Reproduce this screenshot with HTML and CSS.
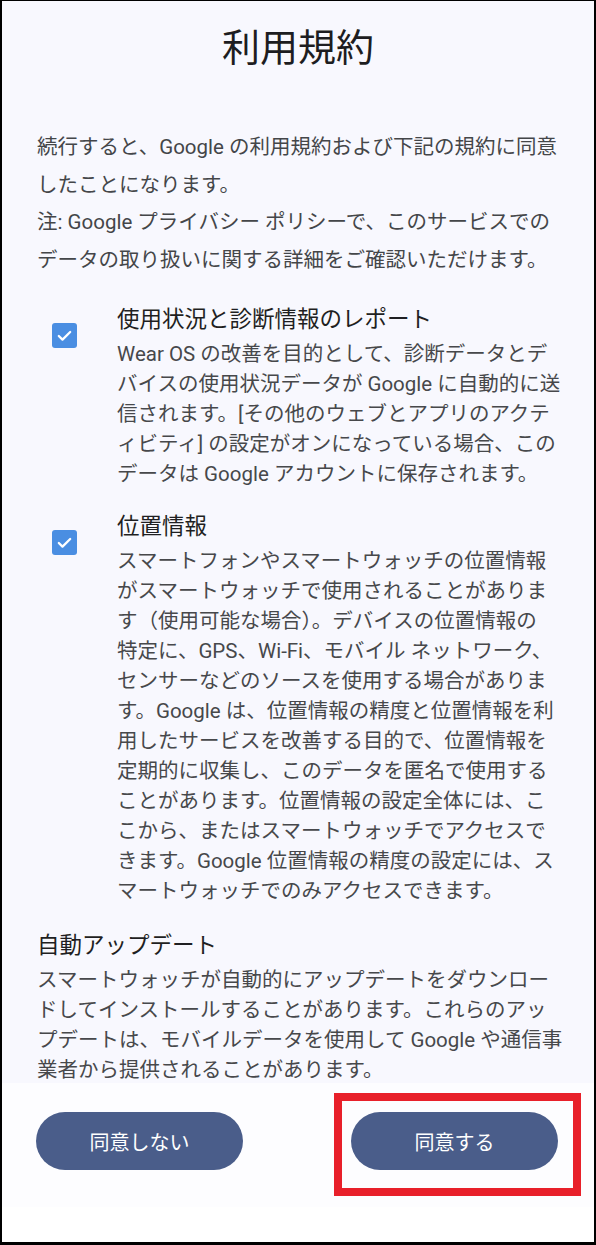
FILE: index.html
```html
<!DOCTYPE html>
<html lang="ja">
<head>
<meta charset="utf-8">
<title>利用規約</title>
<link rel="stylesheet" href="styles.css">
</head>
<body>
<div class="screen">
  <main class="scroll">
    <h1 class="title">利用規約</h1>
    <p class="intro">続行すると、Google の利用規約および下記の規約に同意<br>したことになります。<br>注: Google プライバシー ポリシーで、このサービスでの<br>データの取り扱いに関する詳細をご確認いただけます。</p>

    <section class="item">
      <span class="check"><svg viewBox="0 0 24 24" width="21" height="21"><path d="M5.5 12.5l4.2 4.2L18.5 8" fill="none" stroke="#fff" stroke-width="2.6" stroke-linecap="round" stroke-linejoin="round"/></svg></span>
      <div class="item-body">
        <h2 class="item-title">使用状況と診断情報のレポート</h2>
        <p class="desc">Wear OS の改善を目的として、診断データとデ<br>バイスの使用状況データが Google に自動的に送<br>信されます。[その他のウェブとアプリのアクテ<br>ィビティ] の設定がオンになっている場合、この<br>データは Google アカウントに保存されます。</p>
      </div>
    </section>

    <section class="item item-second">
      <span class="check"><svg viewBox="0 0 24 24" width="21" height="21"><path d="M5.5 12.5l4.2 4.2L18.5 8" fill="none" stroke="#fff" stroke-width="2.6" stroke-linecap="round" stroke-linejoin="round"/></svg></span>
      <div class="item-body">
        <h2 class="item-title">位置情報</h2>
        <p class="desc">スマートフォンやスマートウォッチの位置情報<br>がスマートウォッチで使用されることがありま<br>す（使用可能な場合）。デバイスの位置情報の<br>特定に、GPS、Wi-Fi、モバイル ネットワーク、<br>センサーなどのソースを使用する場合がありま<br>す。Google は、位置情報の精度と位置情報を利<br>用したサービスを改善する目的で、位置情報を<br>定期的に収集し、このデータを匿名で使用する<br>ことがあります。位置情報の設定全体には、こ<br>こから、またはスマートウォッチでアクセスで<br>きます。Google 位置情報の精度の設定には、ス<br>マートウォッチでのみアクセスできます。</p>
      </div>
    </section>

    <section class="auto">
      <h2 class="item-title">自動アップデート</h2>
      <p class="desc">スマートウォッチが自動的にアップデートをダウンロー<br>ドしてインストールすることがあります。これらのアッ<br>プデートは、モバイルデータを使用して Google や通信事<br>業者から提供されることがあります。</p>
    </section>
  </main>

  <footer class="actions">
    <button class="btn">同意しない</button>
    <button class="btn">同意する</button>
    <span class="highlight"></span>
  </footer>
  <div class="navbar"></div>
</div>
</body>
</html>
```

FILE: styles.css
```css
* { box-sizing: border-box; }

html, body {
  margin: 0;
  padding: 0;
  background: #000;
}

.screen {
  width: 596px;
  height: 1245px;
  border-style: solid;
  border-color: #000;
  border-width: 1px 2px 3px 2px;
  display: flex;
  flex-direction: column;
  background: #fff;
  font-family: Roboto, "Noto Sans CJK JP", sans-serif;
  overflow: hidden;
}

.scroll {
  height: 1082px;
  flex: none;
  background: #f8f8fe;
  padding: 23px 0 0 35px;
  overflow: hidden;
}

.title {
  margin: 0;
  text-align: center;
  font-size: 38px;
  line-height: 48px;
  font-weight: 400;
  color: #1d1d21;
  padding-right: 35px;
}

.intro {
  margin: 57px 0 0;
  font-size: 20.5px;
  line-height: 37.5px;
  color: #444649;
  white-space: nowrap;
}

.item {
  display: flex;
  align-items: flex-start;
  margin-top: 20px;
}

.item-second {
  margin-top: 17px;
}

.check {
  flex: none;
  width: 25px;
  height: 25px;
  margin: 24px 40px 0 15px;
  border-radius: 3px;
  background: #4a8ee2;
  display: flex;
  align-items: center;
  justify-content: center;
}

.item-title {
  margin: 0;
  font-size: 22.5px;
  line-height: 40px;
  font-weight: 400;
  color: #1f1f22;
  white-space: nowrap;
}

.desc {
  margin: 0;
  font-size: 20.5px;
  line-height: 30px;
  color: #47484b;
  white-space: nowrap;
}

.item-second .desc {
  line-height: 30px;
}

.auto {
  margin-top: 19px;
}

.actions {
  position: relative;
  height: 124px;
  flex: none;
  background: #fdfdff;
  display: flex;
  align-items: flex-start;
  justify-content: space-between;
  padding: 29px 36px 0 34px;
}

.btn {
  width: 207px;
  height: 58px;
  border: none;
  border-radius: 29px;
  background: #4a5d8a;
  color: #fff;
  font-family: Roboto, "Noto Sans CJK JP", sans-serif;
  font-size: 20px;
  padding: 0;
}

.highlight {
  position: absolute;
  left: 332px;
  top: 10px;
  width: 247px;
  height: 103px;
  border: 8px solid #e8202a;
}

.navbar {
  flex: 1;
  background: #fff;
}
```
